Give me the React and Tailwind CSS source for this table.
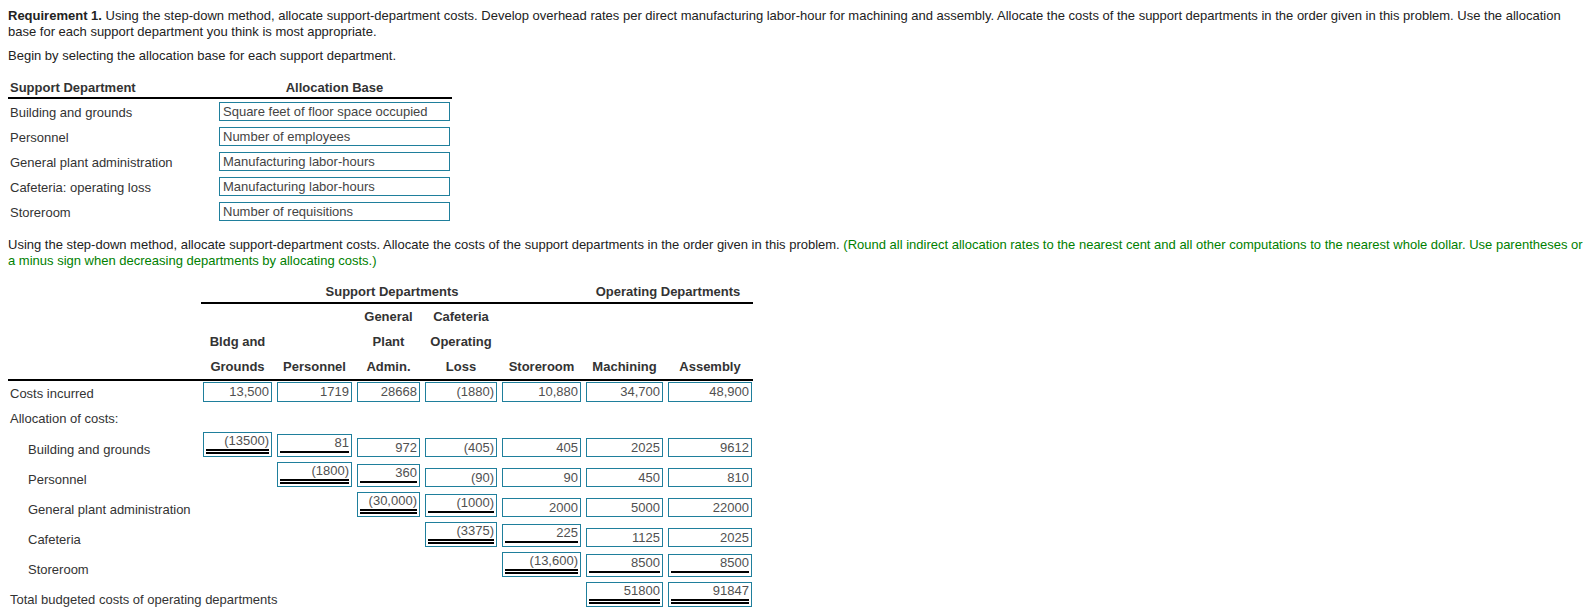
const COLS = ['w-[69px]', 'w-[75px]', 'w-[63px]', 'w-[72px]', 'w-[79px]', 'w-[77px]', 'w-[84px]'];

const bases = [
  ['Building and grounds', 'Square feet of floor space occupied'],
  ['Personnel', 'Number of employees'],
  ['General plant administration', 'Manufacturing labor-hours'],
  ['Cafeteria: operating loss', 'Manufacturing labor-hours'],
  ['Storeroom', 'Number of requisitions'],
];

const headRows = [
  ['', '', 'General', 'Cafeteria', '', '', ''],
  ['Bldg and', '', 'Plant', 'Operating', '', '', ''],
  ['Grounds', 'Personnel', 'Admin.', 'Loss', 'Storeroom', 'Machining', 'Assembly'],
];

const costs = ['13,500', '1719', '28668', '(1880)', '10,880', '34,700', '48,900'];

// d = double underline, s = single underline, p = plain box
const allocRows = [
  { label: 'Building and grounds', cells: [['(13500)', 'd'], ['81', 's'], ['972', 'p'], ['(405)', 'p'], ['405', 'p'], ['2025', 'p'], ['9612', 'p']] },
  { label: 'Personnel', cells: [null, ['(1800)', 'd'], ['360', 's'], ['(90)', 'p'], ['90', 'p'], ['450', 'p'], ['810', 'p']] },
  { label: 'General plant administration', cells: [null, null, ['(30,000)', 'd'], ['(1000)', 's'], ['2000', 'p'], ['5000', 'p'], ['22000', 'p']] },
  { label: 'Cafeteria', cells: [null, null, null, ['(3375)', 'd'], ['225', 's'], ['1125', 'p'], ['2025', 'p']] },
  { label: 'Storeroom', cells: [null, null, null, null, ['(13,600)', 'd'], ['8500', 's'], ['8500', 's']] },
];

function Box({ value, kind }) {
  if (kind === 'd') {
    return (
      <div className="border border-[#1f7f9c] px-[2px] pb-[2px] text-[#505050]">
        <div className="border-b-[5px] border-double border-black text-right leading-[16px]">{value}</div>
      </div>
    );
  }
  if (kind === 's') {
    return (
      <div className="border border-[#1f7f9c] px-[2px] pb-[3px] text-[#505050]">
        <div className="border-b-2 border-black text-right leading-[16px]">{value}</div>
      </div>
    );
  }
  return (
    <div className="h-[19px] border border-[#1f7f9c] px-[2px] text-right leading-[17px] text-[#505050]">{value}</div>
  );
}

export default function App() {
  return (
    <div
      className="min-h-screen bg-white pl-2 pr-[4px] pt-2 text-[13px] text-[#222]"
      style={{ fontFamily: '"Liberation Sans", Arial, sans-serif' }}
    >
      <p className="leading-[16px]">
        <b>Requirement 1.</b> Using the step-down method, allocate support-department costs. Develop overhead rates per direct manufacturing labor-hour for machining and assembly. Allocate the costs of the support departments in the order given in this problem. Use the allocation base for each support department you think is most appropriate.
      </p>
      <p className="mt-2 leading-[16px]">Begin by selecting the allocation base for each support department.</p>

      {/* Allocation base table */}
      <div className="mt-4 text-[#333]">
        <div className="flex w-[444px] border-b-2 border-black pb-[1px] font-bold leading-[16px]">
          <div className="w-[211px] pl-[2px]">Support Department</div>
          <div className="w-[231px] text-center">Allocation Base</div>
        </div>
        {bases.map(([dept, base]) => (
          <div key={dept} className="flex h-[25px] items-center">
            <div className="w-[211px] pl-[2px] pt-[3px]">{dept}</div>
            <div className="h-[19px] w-[231px] border border-[#1f7f9c] pl-[3px] leading-[17px] text-[#444]">{base}</div>
          </div>
        ))}
      </div>

      <p className="mt-[13px] leading-[16px]">
        Using the step-down method, allocate support-department costs. Allocate the costs of the support departments in the order given in this problem.{' '}
        <span className="text-[#008000]">
          (Round all indirect allocation rates to the nearest cent and all other computations to the nearest whole dollar. Use parentheses or a minus sign when decreasing departments by allocating costs.)
        </span>
      </p>

      {/* Step-down allocation table */}
      <div className="mt-[15px] text-[#333]">
        <div className="flex">
          <div className="w-[193px]" />
          <div className="flex w-[552px] border-b-2 border-black pb-[2px] font-bold leading-[16px]">
            <div className="w-[382px] text-center">Support Departments</div>
            <div className="w-[170px] text-center">Operating Departments</div>
          </div>
        </div>

        {headRows.map((row, i) => (
          <div
            key={i}
            className={
              i === 2
                ? 'flex h-[27px] w-[745px] items-center border-b-2 border-black pt-[1px] font-bold'
                : 'flex h-[25px] items-center pt-[1px] font-bold'
            }
          >
            <div className="w-[195px]" />
            <div className="flex gap-[5px]">
              {row.map((h, j) => (
                <div key={j} className={`${COLS[j]} whitespace-nowrap text-center`}>
                  {h}
                </div>
              ))}
            </div>
          </div>
        ))}

        <div className="flex h-[25px] items-start pt-[1px]">
          <div className="w-[195px] pl-[2px] pt-[2px] leading-[20px]">Costs incurred</div>
          <div className="flex gap-[5px]">
            {costs.map((c, j) => (
              <div key={j} className={COLS[j]}>
                <div className="h-[20px] border border-[#1f7f9c] px-[2px] text-right leading-[18px] text-[#505050]">{c}</div>
              </div>
            ))}
          </div>
        </div>

        <div className="flex h-[25px] items-center pl-[2px] pt-[1px]">Allocation of costs:</div>

        {allocRows.map((r) => (
          <div key={r.label} className="flex h-[30px] items-end pb-[4px]">
            <div className="w-[195px] pl-[20px] leading-[14px]">{r.label}</div>
            <div className="flex items-end gap-[5px]">
              {r.cells.map((c, j) => (
                <div key={j} className={COLS[j]}>
                  {c && <Box value={c[0]} kind={c[1]} />}
                </div>
              ))}
            </div>
          </div>
        ))}

        <div className="flex h-[30px] items-end pb-[4px]">
          <div className="w-[195px] whitespace-nowrap pl-[2px] leading-[14px]">Total budgeted costs of operating departments</div>
          <div className="flex items-end gap-[5px]">
            {COLS.map((w, j) => (
              <div key={j} className={w}>
                {j === 5 && <Box value="51800" kind="d" />}
                {j === 6 && <Box value="91847" kind="d" />}
              </div>
            ))}
          </div>
        </div>
      </div>
    </div>
  );
}
